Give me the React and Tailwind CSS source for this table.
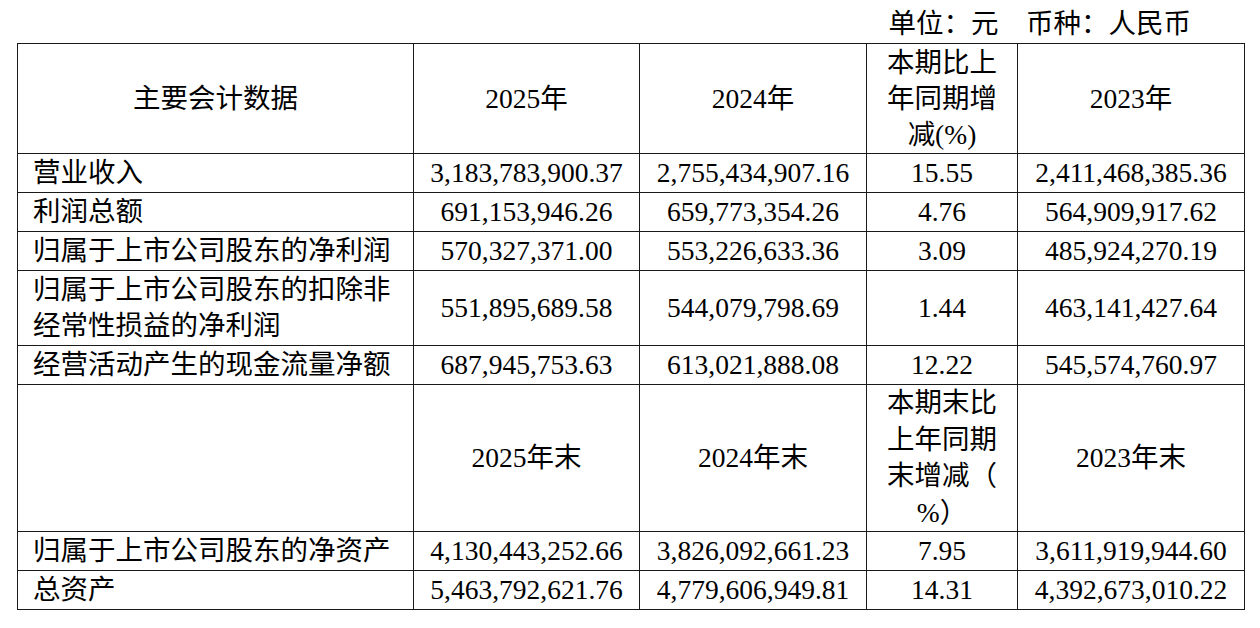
import React from 'react';

const font = { fontFamily: '"Liberation Serif", "Noto Sans CJK SC", serif' };

const rows = [
  { label: '营业收入', v: ['3,183,783,900.37', '2,755,434,907.16', '15.55', '2,411,468,385.36'], h: 'h-[39px]' },
  { label: '利润总额', v: ['691,153,946.26', '659,773,354.26', '4.76', '564,909,917.62'], h: 'h-[39px]' },
  { label: '归属于上市公司股东的净利润', v: ['570,327,371.00', '553,226,633.36', '3.09', '485,924,270.19'], h: 'h-[39px]' },
  {
    label: (
      <>
        归属于上市公司股东的扣除非
        <br />
        经常性损益的净利润
      </>
    ),
    v: ['551,895,689.58', '544,079,798.69', '1.44', '463,141,427.64'],
    h: 'h-[75px]',
  },
  { label: '经营活动产生的现金流量净额', v: ['687,945,753.63', '613,021,888.08', '12.22', '545,574,760.97'], h: 'h-[39px]' },
];

const rows2 = [
  { label: '归属于上市公司股东的净资产', v: ['4,130,443,252.66', '3,826,092,661.23', '7.95', '3,611,919,944.60'] },
  { label: '总资产', v: ['5,463,792,621.76', '4,779,606,949.81', '14.31', '4,392,673,010.22'] },
];

const cell = 'border border-[#1a1a1a] p-0 align-middle';

function DataRow({ label, v, h }) {
  return (
    <tr className={h}>
      <td className={`${cell} pl-[15px] text-left`}>{label}</td>
      {v.map((x, i) => (
        <td key={i} className={`${cell} text-center`}>
          {x}
        </td>
      ))}
    </tr>
  );
}

export default function App() {
  return (
    <div className="w-[1260px] h-[628px] bg-white text-black text-[27.5px] leading-[36px]" style={font}>
      <div className="ml-[17px] w-[1227px] pt-[6px]">
        <div className="h-[37px] text-right pr-[53px] whitespace-pre">单位：元　币种：人民币</div>
        <table className="w-[1227px] table-fixed border-collapse">
          <colgroup>
            <col className="w-[396px]" />
            <col className="w-[226px]" />
            <col className="w-[227px]" />
            <col className="w-[151px]" />
            <col className="w-[227px]" />
          </colgroup>
          <tbody>
            <tr className="h-[110px]">
              <td className={`${cell} text-center`}>主要会计数据</td>
              <td className={`${cell} text-center`}>2025年</td>
              <td className={`${cell} text-center`}>2024年</td>
              <td className={`${cell} text-center`}>
                本期比上
                <br />
                年同期增
                <br />
                减(%)
              </td>
              <td className={`${cell} text-center`}>2023年</td>
            </tr>
            {rows.map((r, i) => (
              <DataRow key={i} {...r} />
            ))}
            <tr className="h-[147px]">
              <td className={cell}></td>
              <td className={`${cell} text-center`}>2025年末</td>
              <td className={`${cell} text-center`}>2024年末</td>
              <td className={`${cell} text-center leading-[36.5px]`}>
                本期末比
                <br />
                上年同期
                <br />
                末增减（
                <br />
                %）
              </td>
              <td className={`${cell} text-center`}>2023年末</td>
            </tr>
            {rows2.map((r, i) => (
              <DataRow key={i} {...r} h="h-[39px]" />
            ))}
          </tbody>
        </table>
      </div>
    </div>
  );
}
